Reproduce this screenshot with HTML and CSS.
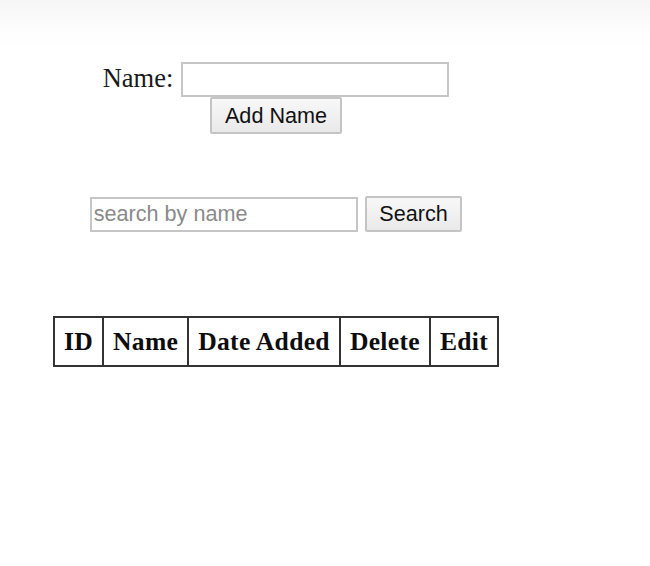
FILE: index.html
```html
<!DOCTYPE html>
<html>
<head>
<meta charset="utf-8">
<link rel="stylesheet" href="styles.css">
</head>
<body>
<div class="page">
  <form class="add-form">
    <div class="name-row">
      <label class="name-label" for="name">Name:</label>
      <input class="text-input name-input" id="name" type="text">
    </div>
    <button class="btn add-btn" type="button">Add Name</button>
  </form>
  <div class="search-row">
    <input class="text-input search-input" type="text" placeholder="search by name">
    <button class="btn search-btn" type="button">Search</button>
  </div>
  <table class="names-table">
    <thead>
      <tr>
        <th>ID</th>
        <th>Name</th>
        <th>Date Added</th>
        <th>Delete</th>
        <th>Edit</th>
      </tr>
    </thead>
  </table>
</div>
</body>
</html>
```
FILE: styles.css
```css
html, body {
  margin: 0;
  padding: 0;
}
body {
  background: linear-gradient(to bottom, #f6f6f6 0px, #fdfdfd 30px, #ffffff 50px);
  min-height: 566px;
  font-family: "Liberation Serif", "Times New Roman", serif;
  color: #111;
}
.page {
  width: 552px;
  padding-top: 62px;
  display: flex;
  flex-direction: column;
  align-items: center;
}
.add-form {
  display: flex;
  flex-direction: column;
  align-items: center;
  margin: 0;
}
.name-row {
  display: flex;
  align-items: baseline;
  gap: 8px;
}
.name-label {
  font-size: 26.5px;
  color: #1a1a1a;
}
.text-input {
  box-sizing: border-box;
  height: 35px;
  border: 2px solid #c6c6c6;
  background: #fff;
  font-family: "Liberation Sans", Arial, sans-serif;
  font-size: 21.6px;
  padding: 0 2px;
  margin: 0;
  outline: none;
}
.name-input {
  width: 268px;
}
.search-input {
  width: 268px;
}
.search-input::placeholder {
  color: #8a8a8a;
  opacity: 1;
}
.btn {
  box-sizing: border-box;
  font-family: "Liberation Sans", Arial, sans-serif;
  font-size: 21.6px;
  color: #111;
  background: linear-gradient(to bottom, #f8f8f8, #e9e9e9);
  border: 2px solid #c4c4c4;
  border-radius: 2px;
  padding: 0 12.5px;
  margin: 0;
}
.add-btn {
  height: 37px;
}
.search-row {
  margin-top: 62px;
  display: flex;
  align-items: center;
  gap: 7px;
}
.search-btn {
  height: 36px;
}
.names-table {
  margin-top: 84px;
  border-collapse: collapse;
  border: 2px solid #333;
}
.names-table th {
  border: 2px solid #333;
  font-size: 25.6px;
  font-weight: bold;
  letter-spacing: 0.3px;
  color: #0d0d0d;
  padding: 9px 9px 8px;
}
```
